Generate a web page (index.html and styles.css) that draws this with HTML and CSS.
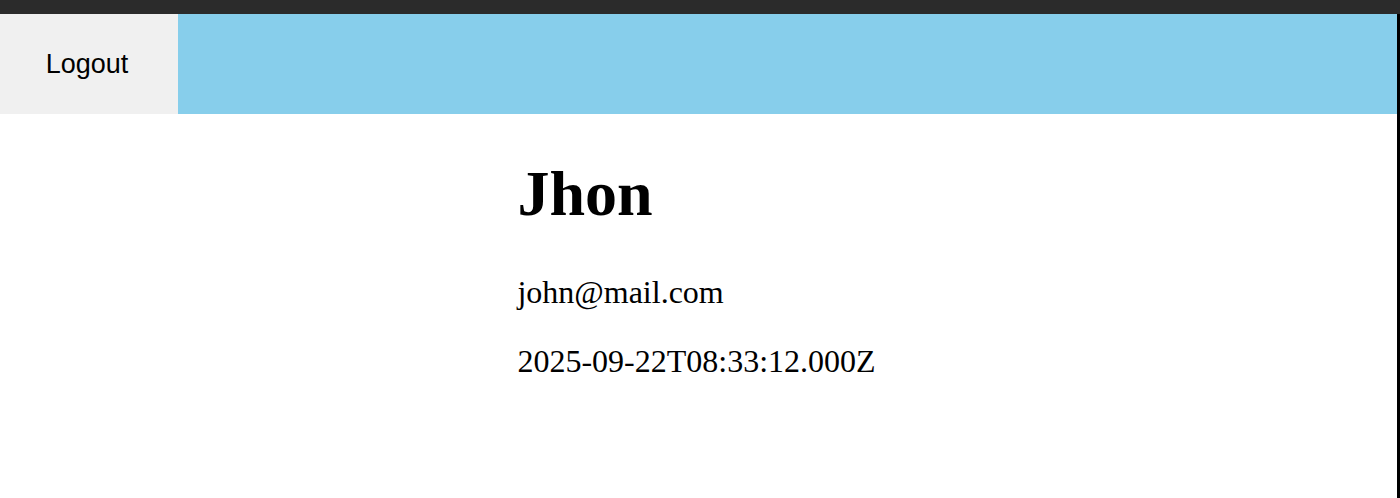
FILE: index.html
```html
<!DOCTYPE html>
<html lang="en">
<head>
<meta charset="utf-8">
<title>Profile</title>
<link rel="stylesheet" href="styles.css">
</head>
<body>
<div class="topbar"></div>
<div class="frame">
  <div class="page">
    <nav class="nav">
      <button class="logout" type="button">Logout</button>
    </nav>
    <main class="main">
      <div class="profile">
        <h1 class="name">Jhon</h1>
        <p class="line">john@mail.com</p>
        <p class="line">2025-09-22T08:33:12.000Z</p>
      </div>
    </main>
  </div>
  <div class="edge"></div>
</div>
</body>
</html>
```

FILE: styles.css
```css
html, body {
  margin: 0;
  padding: 0;
  height: 100%;
  background: #ffffff;
}

body {
  display: flex;
  flex-direction: column;
  font-family: "Liberation Serif", "Times New Roman", serif;
  color: #000000;
  overflow: hidden;
}

.topbar {
  height: 14px;
  background: #2b2b2b;
  flex: none;
}

.frame {
  flex: 1;
  display: flex;
}

.page {
  flex: 1;
  display: flex;
  flex-direction: column;
}

.edge {
  width: 3px;
  background: #000000;
  flex: none;
}

.nav {
  height: 100px;
  background: #87ceeb;
  display: flex;
}

.logout {
  width: 178px;
  height: 100px;
  border: none;
  margin: 0;
  padding: 0 4px 0 0;
  background: #f0f0f0;
  font-family: "Liberation Sans", Arial, sans-serif;
  font-size: 27px;
  color: #000000;
  cursor: pointer;
}

.main {
  display: flex;
  justify-content: center;
  padding-right: 4px;
}

.profile {
  display: flex;
  flex-direction: column;
  align-items: flex-start;
}

.name {
  font-size: 64px;
  font-weight: bold;
  margin: 43px 0;
}

.line {
  font-size: 32px;
  margin: 0 0 32px;
}
```
